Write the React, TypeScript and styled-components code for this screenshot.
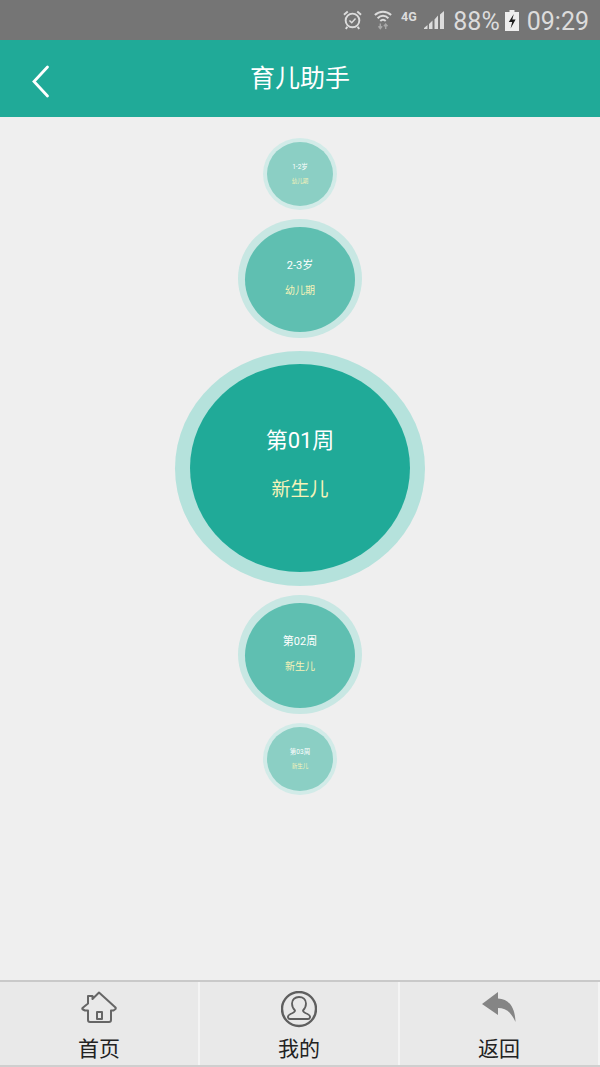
import React from 'react'
import styled, { createGlobalStyle } from 'styled-components'

const GlobalStyle = createGlobalStyle`
  html, body {
    margin: 0;
    padding: 0;
    background: #efefef;
  }
  * {
    box-sizing: border-box;
  }
`

const Page = styled.div`
  width: 600px;
  height: 1067px;
  display: flex;
  flex-direction: column;
  overflow: hidden;
  font-family: Roboto, 'Noto Sans CJK SC', sans-serif;
`

const StatusBar = styled.div`
  height: 40px;
  flex: none;
  background: #757575;
  display: flex;
  align-items: center;
  justify-content: flex-end;
  padding-right: 11px;
  color: #dcdcdc;
`

const StatusIcon = styled.svg<{ $mr: number }>`
  display: block;
  margin-right: ${({ $mr }) => $mr}px;
`

const StatusText = styled.span<{ $mr?: number }>`
  font-size: 25px;
  line-height: 36px;
  margin-top: 4px;
  margin-right: ${({ $mr }) => $mr || 0}px;
`

const Header = styled.div`
  height: 77px;
  flex: none;
  background: #20aa98;
  display: flex;
  align-items: center;
  justify-content: center;
  position: relative;
`

const BackButton = styled.svg`
  position: absolute;
  left: 30px;
  top: 24px;
`

const Title = styled.div`
  color: #fff;
  font-size: 25px;
  line-height: 34px;
`

const Content = styled.div`
  flex: 1;
  display: flex;
  flex-direction: column;
  align-items: center;
  padding-top: 21px;
`

type Level = 0 | 1 | 2

const levels = [
  { w: 250, h: 235, pt: 13, pb: 14, iw: 220, ring: '#b5e2dc', fill: '#20aa98', top: 22, sub: 19, gap: 24, padTop: 0, pad: 6 },
  { w: 124, h: 119, pt: 8, pb: 6, iw: 110, ring: '#c8e7e3', fill: '#5fbfb1', top: 11, sub: 10, gap: 12, padTop: 0, pad: 3 },
  { w: 74, h: 72, pt: 4, pb: 4, iw: 66, ring: '#d2ebe8', fill: '#8bcfc4', top: 6.5, sub: 5.5, gap: 6, padTop: 1, pad: 0 },
]

const Ring = styled.div<{ $level: Level; $mt: number }>`
  width: ${({ $level }) => levels[$level].w}px;
  height: ${({ $level }) => levels[$level].h}px;
  margin-top: ${({ $mt }) => $mt}px;
  padding-top: ${({ $level }) => levels[$level].pt}px;
  padding-bottom: ${({ $level }) => levels[$level].pb}px;
  border-radius: 50%;
  background: ${({ $level }) => levels[$level].ring};
  display: flex;
  justify-content: center;
  flex: none;
`

const Disc = styled.div<{ $level: Level }>`
  width: ${({ $level }) => levels[$level].iw}px;
  height: 100%;
  border-radius: 50%;
  background: ${({ $level }) => levels[$level].fill};
  display: flex;
  flex-direction: column;
  align-items: center;
  justify-content: center;
  gap: ${({ $level }) => levels[$level].gap}px;
  padding-top: ${({ $level }) => levels[$level].padTop}px;
  padding-bottom: ${({ $level }) => levels[$level].pad}px;
`

const StageName = styled.div<{ $level: Level }>`
  color: #fff;
  font-size: ${({ $level }) => levels[$level].top}px;
  line-height: 1.2;
  white-space: nowrap;
`

const StageKind = styled.div<{ $level: Level }>`
  color: #f7f3b8;
  font-size: ${({ $level }) => levels[$level].sub}px;
  line-height: 1.2;
  white-space: nowrap;
`

const TabBar = styled.div`
  height: 87px;
  flex: none;
  background: #e9e9e9;
  border-top: 2px solid #c9c9c9;
  border-bottom: 2px solid #cfcfcf;
  display: flex;
`

const TabItem = styled.div`
  flex: 1;
  display: flex;
  flex-direction: column;
  align-items: center;
  padding-top: 9px;
  border-right: 2px solid #f4f4f4;
`

const TabIcon = styled.svg`
  display: block;
  flex: none;
  height: 37px;
`

const TabLabel = styled.div`
  color: #222;
  font-size: 21px;
  line-height: 30px;
  margin-top: 6px;
`

const stages: { name: string; kind: string; level: Level; mt: number }[] = [
  { name: '1-2岁', kind: '幼儿期', level: 2, mt: 0 },
  { name: '2-3岁', kind: '幼儿期', level: 1, mt: 9 },
  { name: '第01周', kind: '新生儿', level: 0, mt: 13 },
  { name: '第02周', kind: '新生儿', level: 1, mt: 9 },
  { name: '第03周', kind: '新生儿', level: 2, mt: 9 },
]

export default function App() {
  return (
    <Page>
      <GlobalStyle />
      <StatusBar>
        <StatusIcon $mr={12} width="19" height="22" viewBox="0 0 20 22" fill="none" stroke="#dcdcdc">
          <circle cx="10" cy="11.500" r="7.200" strokeWidth="2" />
          <path d="M6.800 11.500l2.400 2.400 4-4.400" strokeWidth="1.600" />
          <path d="M1 5.500L5 2M19 5.500L15 2M4.500 18l-1.500 2.500M15.500 18l1.500 2.500" strokeWidth="2" />
        </StatusIcon>
        <StatusIcon $mr={8} width="18" height="22" viewBox="0 0 20 24" fill="none" stroke="#dcdcdc">
          <path d="M1 6.500C6 1.500 14 1.500 19 6.500" strokeWidth="2.200" />
          <path d="M4 10C7.500 6.500 12.500 6.500 16 10" strokeWidth="2.200" />
          <path d="M7 13.200C8.800 11.500 11.200 11.500 13 13.200" strokeWidth="2.200" />
          <path d="M7 16v5M5 19l2 2.500 2-2.500M13 22v-5M11 19l2-2.500 2 2.500" stroke="#a8a8a8" strokeWidth="1.600" />
        </StatusIcon>
        <StatusIcon $mr={6} width="18" height="24" viewBox="0 0 18 24">
          <text x="1" y="12.500" fill="#dcdcdc" fontFamily="Roboto, sans-serif" fontSize="12.500" fontWeight="700">
            4G
          </text>
        </StatusIcon>
        <StatusIcon $mr={9} width="20" height="18" viewBox="0 0 20 18" fill="#dcdcdc">
          <path d="M0 18h3.500v-4L0 17zM5 18h3.500V9.500L5 13zM10.500 18H14V4.500l-3.500 4zM16 18h4V0l-4 3.500z" />
        </StatusIcon>
        <StatusText $mr={5}>88%</StatusText>
        <StatusIcon $mr={8} width="14" height="22" viewBox="0 0 14 22">
          <path d="M4.500 1h5v2H14v19H0V3h4.500z" fill="#eeeeee" />
          <path d="M8.800 5L3.800 13h3.400L5.600 19.500 10.600 10.500H7.300z" fill="#1c1c1c" />
        </StatusIcon>
        <StatusText>09:29</StatusText>
      </StatusBar>
      <Header>
        <BackButton width="20" height="36" viewBox="0 0 20 36" fill="none" stroke="#fff" strokeWidth="2.800" strokeLinecap="round">
          <path d="M17.500 3L4 17.500 17.500 32" />
        </BackButton>
        <Title>育儿助手</Title>
      </Header>
      <Content>
        {stages.map((s) => (
          <Ring key={s.name} $level={s.level} $mt={s.mt}>
            <Disc $level={s.level}>
              <StageName $level={s.level}>{s.name}</StageName>
              <StageKind $level={s.level}>{s.kind}</StageKind>
            </Disc>
          </Ring>
        ))}
      </Content>
      <TabBar>
        <TabItem>
          <TabIcon width="36" viewBox="0 0 36 37" fill="none" stroke="#666" strokeWidth="2" strokeLinejoin="round">
            <path d="M18 1.500L11.500 8V5H7v7.500L1.500 17Q1 18 2 18.500L4 19.500H7V29Q7 31 9 31H28Q30 31 30 29V19.500H32.500L34.500 18Q35 17 34.500 16.500Z" />
            <path d="M16 21h5v7h-5z" />
          </TabIcon>
          <TabLabel>首页</TabLabel>
        </TabItem>
        <TabItem>
          <TabIcon width="36" viewBox="0 0 36 37" fill="none" stroke="#5f5f5f">
            <circle cx="18" cy="18" r="17" strokeWidth="2.400" />
            <path
              strokeWidth="1.800"
              d="M14 19.500C11.500 17 11 14.500 11 12.500C11 8.500 14 6 18 6C22 6 25 8.500 25 12.500C25 14.500 24.500 17 22 19.500C22 21 24 22 26.500 23C28.500 24 29.500 25 29 26.500C28.700 27.700 28 28 27 28H9C8 28 7.300 27.700 7 26.500C6.500 25 7.500 24 9.500 23C12 22 14 21 14 19.500Z"
            />
          </TabIcon>
          <TabLabel>我的</TabLabel>
        </TabItem>
        <TabItem>
          <TabIcon width="36" viewBox="0 0 36 37" fill="#858585">
            <path d="M17 1L1 13l16 11v-7c8 0 13 4 17.500 14C34 16 28 8 17 7.500z" />
          </TabIcon>
          <TabLabel>返回</TabLabel>
        </TabItem>
      </TabBar>
    </Page>
  )
}
